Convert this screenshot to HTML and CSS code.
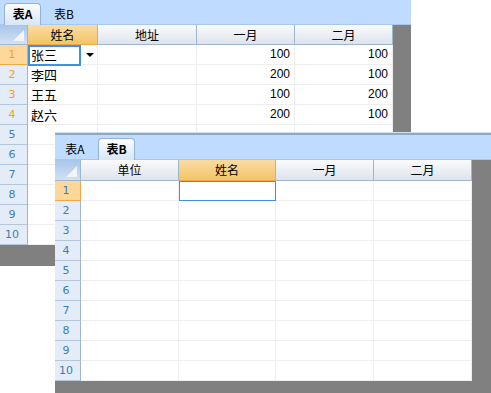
FILE: index.html
```html
<!DOCTYPE html>
<html>
<head>
    <meta charset="UTF-8">
    <title>表格</title>
    <link rel="stylesheet" href="styles.css">
</head>
<body>
    <div class="window win-a">
        <div class="tabbar">
            <div class="tab active">表A</div>
            <div class="tab">表B</div>
        </div>
        <div class="grid">
            <div class="row head">
                <div class="cell corner"></div>
                <div class="cell hcell sel" style="width:70px">姓名</div>
                <div class="cell hcell" style="width:99px">地址</div>
                <div class="cell hcell" style="width:98px">一月</div>
                <div class="cell hcell" style="width:98px">二月</div>
            </div>
            <div class="body" id="body-a"></div>
        </div>
    </div>

    <div class="window win-b">
        <div class="tabbar">
            <div class="tab">表A</div>
            <div class="tab active">表B</div>
        </div>
        <div class="grid">
            <div class="row head">
                <div class="cell corner"></div>
                <div class="cell hcell" style="width:98px">单位</div>
                <div class="cell hcell sel" style="width:97px">姓名</div>
                <div class="cell hcell" style="width:98px">一月</div>
                <div class="cell hcell" style="width:98px">二月</div>
            </div>
            <div class="body" id="body-b"></div>
        </div>
    </div>

    <script>
        // 表A 数据
        const dataA = [
            ['张三', '', '100', '100'],
            ['李四', '', '200', '100'],
            ['王五', '', '100', '200'],
            ['赵六', '', '200', '100']
        ];

        function buildRows(target, widths, data, opts) {
            const body = document.getElementById(target);
            for (let i = 0; i < 10; i++) {
                const row = document.createElement('div');
                row.className = 'row';
                const rh = document.createElement('div');
                rh.className = 'cell rhead';
                if (i === 0) rh.className += ' sel';
                if (opts.orange && i < data.length) rh.className += ' used';
                rh.textContent = i + 1;
                row.appendChild(rh);
                widths.forEach((w, j) => {
                    const c = document.createElement('div');
                    c.className = 'cell dcell' + (j >= 2 ? ' num' : '');
                    c.style.width = w + 'px';
                    if (data[i]) c.textContent = data[i][j];
                    if (i === 0 && j === opts.editCol) {
                        const ed = document.createElement('div');
                        ed.className = 'editor ' + opts.editClass;
                        c.appendChild(ed);
                        if (opts.arrow) {
                            const ar = document.createElement('span');
                            ar.className = 'arrow';
                            c.appendChild(ar);
                        }
                    }
                    row.appendChild(c);
                });
                body.appendChild(row);
            }
        }

        buildRows('body-a', [70, 99, 98, 98], dataA, { orange: true, editCol: 0, editClass: 'ed-a', arrow: true });
        buildRows('body-b', [98, 97, 98, 98], [], { orange: false, editCol: 1, editClass: 'ed-b', arrow: false });
    </script>
</body>
</html>
```

FILE: styles.css
```css
* {
    box-sizing: border-box;
    margin: 0;
    padding: 0;
}

body {
    width: 491px;
    height: 393px;
    overflow: hidden;
    position: relative;
    background: #fff;
    font-family: "Liberation Sans", "Noto Sans CJK SC", sans-serif;
    font-size: 12px;
    color: #000;
}

.window {
    position: absolute;
    background: #808080;
    overflow: hidden;
}

.win-a {
    left: 0;
    top: 0;
    width: 411px;
    height: 266px;
}

.win-b {
    left: 55px;
    top: 133px;
    width: 440px;
    height: 262px;
    border-top: 2px solid #98a8bc;
    box-shadow: 0 -1px 0 #c6e0ee;
}

.tabbar {
    height: 25px;
    background: #bfdbff;
    border-bottom: 1px solid #a9c6ec;
    display: flex;
    align-items: flex-end;
    padding-left: 4px;
    gap: 4px;
}

.win-b .tabbar {
    padding-left: 1px;
}

.tab {
    height: 21px;
    width: 38px;
    line-height: 20px;
    text-align: center;
    font-family: "Noto Sans CJK SC", sans-serif;
    font-size: 12px;
    margin-bottom: -1px;
}

.tab.active {
    width: 37px;
    height: 22px;
    font-weight: bold;
    background: linear-gradient(#fbfdff, #d8e6f6);
    border: 1px solid #92b2da;
    border-bottom: none;
    border-radius: 4px 4px 0 0;
}

.grid {
    display: inline-block;
    background: #fff;
    vertical-align: top;
}

.row {
    display: flex;
    height: 20px;
}

.row.head {
    height: 20px;
}

.win-b .row.head {
    height: 21px;
}

.cell {
    height: 100%;
    border-right: 1px solid #eeeeee;
    border-bottom: 1px solid #eeeeee;
    overflow: visible;
    position: relative;
    white-space: nowrap;
    line-height: 19px;
}

.corner {
    width: 28px;
    background: linear-gradient(#a9c5ea, #d1e1f5);
    border-right: 1px solid #9eb6ce;
    border-bottom: 1px solid #9eb6ce;
}

.win-b .corner {
    width: 26px;
}

.corner::after {
    content: "";
    position: absolute;
    right: 3px;
    bottom: 3px;
    border-left: 11px solid transparent;
    border-bottom: 11px solid #f2f6fb;
}

.hcell {
    text-align: center;
    font-family: "Noto Sans CJK SC", sans-serif;
    background: linear-gradient(#fafbfd, #dde3ec);
    border-right: 1px solid #9eb6ce;
    border-bottom: 1px solid #9eb6ce;
}

.hcell.sel {
    background: linear-gradient(#f9dca3, #f4c467);
    border-right: 1px solid #f1a74a;
    border-bottom: 1px solid #f1a74a;
}

.rhead {
    width: 28px;
    padding-right: 3px;
    text-align: center;
    font-family: "DejaVu Sans", sans-serif;
    font-size: 11px;
    color: #3f7cba;
    background: #e4ecf7;
    border-right: 1px solid #9eb6ce;
    border-bottom: 1px solid #b3c6dc;
}

.win-b .rhead {
    width: 26px;
}

.rhead.used {
    color: #f4a11a;
}

.rhead.sel {
    background: #fdd89a;
    border-right: 1px solid #f1a74a;
    border-bottom: 1px solid #f1a74a;
}

.dcell {
    padding: 0 4px 0 3px;
    font-family: "Noto Sans CJK SC", sans-serif;
    font-size: 13px;
}

.dcell.num {
    text-align: right;
    font-family: "Liberation Sans", sans-serif;
    font-size: 12px;
}

.editor {
    position: absolute;
    border: 2px solid #3d92e8;
}

.ed-a {
    width: 53px;
    height: 21px;
    left: 0;
    top: 0;
}

.ed-b {
    width: 97px;
    height: 20px;
    left: 0;
    top: 0;
    border-width: 1px;
}

.arrow {
    position: absolute;
    left: 58px;
    top: 8px;
    border-left: 4px solid transparent;
    border-right: 4px solid transparent;
    border-top: 4px solid #000;
}
```
